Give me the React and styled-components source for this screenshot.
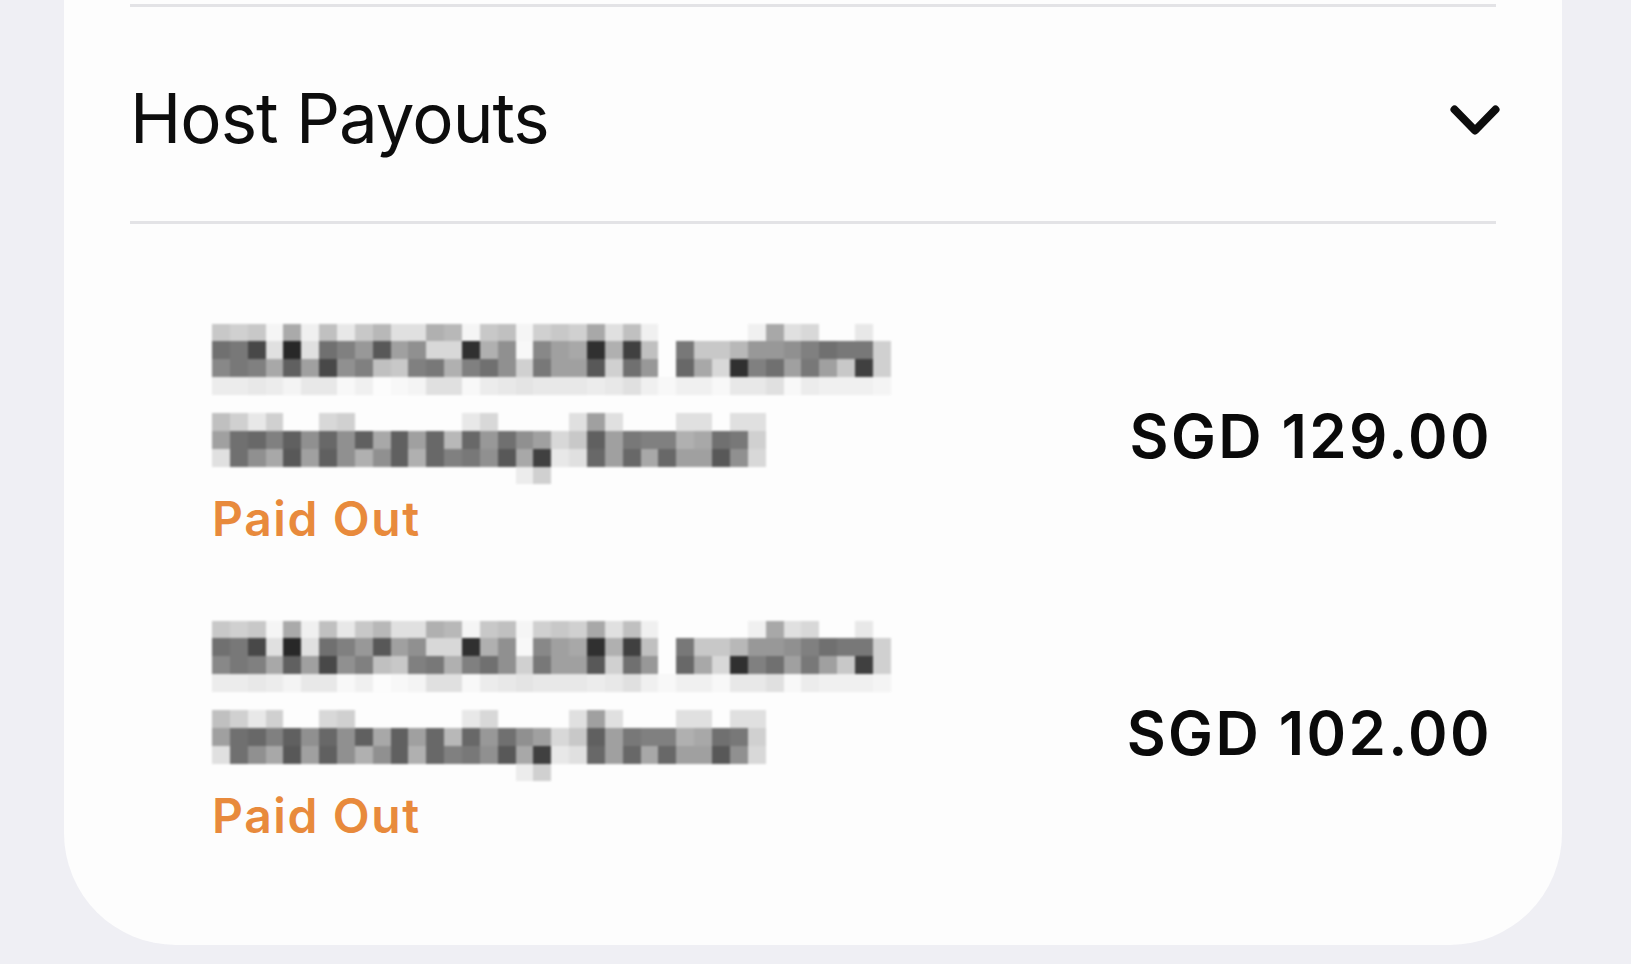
import React from 'react'
import styled, { createGlobalStyle } from 'styled-components'

const GlobalStyle = createGlobalStyle`
  html, body {
    margin: 0;
    padding: 0;
    background: #efeff4;
    font-family: Inter, "Noto Sans", "Liberation Sans", sans-serif;
    -webkit-font-smoothing: antialiased;
  }
`

const CELL = 17.87

// grey levels of the redacted reference line, one string per mosaic row ("--" = empty)
const MOSAIC = [
  'c8 d0 c8 f5 aa f0 c0 e8 c8 b8 e0 e0 b0 b8 f5 c8 c0 f5 d0 c8 d0 a8 e0 c0 f0 -- -- -- -- -- f0 a8 e0 d8 -- -- e8 --',
  '70 78 48 e0 28 e0 70 80 98 58 a0 90 d8 d8 30 b0 90 f8 88 a0 a8 30 b0 40 c0 -- 78 c8 c8 b8 98 98 90 80 70 78 78 d0',
  '88 78 80 a8 60 a0 48 90 80 c0 c8 80 78 b0 80 70 90 d0 78 a0 a0 58 d0 70 98 -- 68 a8 d8 30 80 70 a0 78 a0 c8 40 d0',
  'ec ec e8 ec f4 e8 e8 f8 f0 fc f8 f4 e0 e0 f8 ec e8 e4 e8 e8 e8 ec e8 e0 f0 f8 f0 f0 f8 e8 e8 e0 f8 ec f0 f0 f0 f4',
  '-- -- -- -- -- -- -- -- -- -- -- -- -- -- -- -- -- -- -- -- -- -- -- -- -- -- -- -- -- -- -- -- -- -- -- -- -- --',
  'c0 d0 e8 d0 -- -- d8 d0 -- -- -- -- -- -- e8 d8 -- -- -- -- e0 a0 e0 -- -- -- e0 e0 -- e0 e0 -- -- -- -- -- -- --',
  'a0 70 68 80 60 90 68 90 60 a8 60 a0 68 b8 68 98 70 90 a0 d8 c8 60 a0 78 80 80 b0 a8 70 78 d0 -- -- -- -- -- -- --',
  'e0 70 90 a8 58 a0 60 90 b0 90 60 b0 68 80 78 90 58 a8 40 e8 e0 68 a0 68 a8 68 a0 a0 58 90 d8 -- -- -- -- -- -- --',
  '-- -- -- -- -- -- -- -- -- -- -- -- -- -- -- -- -- ec d0 -- -- -- -- -- -- -- -- -- -- -- -- -- -- -- -- -- -- --',
].map(row => row.split(' '))

const payouts = [
  { id: 1, amount: 'SGD 129.00', status: 'Paid Out' },
  { id: 2, amount: 'SGD 102.00', status: 'Paid Out' },
]

const Page = styled.div`
  padding: 0 69px 19px 64px;
`

const Card = styled.section`
  background: #fdfdfd;
  border-radius: 0 0 112px 112px;
  padding: 4px 66px 66px 66px;
`

const Divider = styled.div`
  height: 3px;
  background: #e3e3e6;
`

const Header = styled.div`
  height: 214px;
  box-sizing: border-box;
  padding-top: 7px;
  display: flex;
  align-items: center;
  justify-content: space-between;
`

const Title = styled.h2`
  margin: 0;
  font-size: 69px;
  font-weight: 400;
  letter-spacing: -1px;
  color: #0d0d0d;
`

const Chevron = styled.svg`
  width: 50px;
  height: 32px;
  margin-right: -4px;
  margin-top: 6px;
`

const List = styled.div`
  padding-top: 61px;
`

const Row = styled.div`
  display: flex;
  align-items: center;
  justify-content: space-between;
  padding: 38px 4px 38px 82px;
  height: 297px;
  box-sizing: border-box;
`

const Info = styled.div`
  display: flex;
  flex-direction: column;
`

const Mosaic = styled.div`
  display: grid;
  grid-template-columns: repeat(38, ${CELL}px);
  grid-auto-rows: ${CELL}px;
  filter: blur(1px);
`

const Cell = styled.span.attrs(p => ({
  style: { background: p.$shade === '--' ? 'transparent' : `#${p.$shade}${p.$shade}${p.$shade}` },
}))`
  display: block;
`

const Status = styled.div`
  margin-top: 11px;
  font-size: 48px;
  line-height: 1;
  font-weight: 600;
  letter-spacing: 1.6px;
  color: #e88a3c;
`

const Amount = styled.div`
  font-size: 60px;
  line-height: 1;
  font-weight: 600;
  letter-spacing: 2.4px;
  color: #0a0a0a;
  margin-top: 4px;
`

const Redacted = () => (
  <Mosaic>
    {MOSAIC.flatMap((row, r) => row.map((shade, c) => <Cell key={`${r}-${c}`} $shade={shade} />))}
  </Mosaic>
)

export default function App() {
  return (
    <>
      <GlobalStyle />
      <Page>
        <Card>
          <Divider />
          <Header>
            <Title>Host Payouts</Title>
            <Chevron viewBox="0 0 50 32">
              <polyline points="4.5,4.5 25,25.5 45.5,4.5" fill="none" stroke="#0d0d0d" strokeWidth="8" strokeLinecap="round" strokeLinejoin="round" />
            </Chevron>
          </Header>
          <Divider />
          <List>
            {payouts.map(p => (
              <Row key={p.id}>
                <Info>
                  <Redacted />
                  <Status>{p.status}</Status>
                </Info>
                <Amount>{p.amount}</Amount>
              </Row>
            ))}
          </List>
        </Card>
      </Page>
    </>
  )
}
